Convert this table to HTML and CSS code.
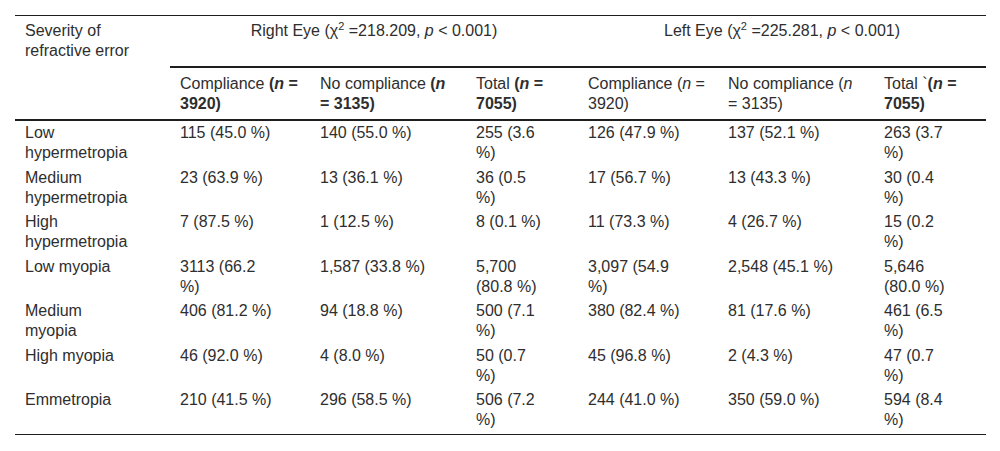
FILE: index.html
```html
<!DOCTYPE html>
<html lang="en">
<head>
<meta charset="utf-8">
<title>Compliance by severity of refractive error</title>
<link rel="stylesheet" href="styles.css">
</head>
<body>
<table class="data">
  <colgroup>
    <col class="c-stub">
    <col class="c-comp">
    <col class="c-nocomp">
    <col class="c-total">
    <col class="c-comp">
    <col class="c-nocomp">
    <col class="c-total">
  </colgroup>
  <thead>
    <tr class="group-row">
      <th class="stub">Severity of<br>refractive error</th>
      <th class="eye" colspan="3">Right Eye (χ<sup>2</sup> =218.209, <i>p</i> &lt; 0.001)</th>
      <th class="eye" colspan="3">Left Eye (χ<sup>2</sup> =225.281, <i>p</i> &lt; 0.001)</th>
    </tr>
    <tr class="sub-row">
      <th></th>
      <th>Compliance <b>(<i>n</i> =<br>3920)</b></th>
      <th>No compliance <b>(<i>n</i><br>= 3135)</b></th>
      <th>Total <b>(<i>n</i> =<br>7055)</b></th>
      <th>Compliance (<i>n</i> =<br>3920)</th>
      <th>No compliance (<i>n</i><br>= 3135)</th>
      <th>Total `<b>(<i>n</i> =<br>7055)</b></th>
    </tr>
  </thead>
  <tbody>
    <tr>
      <td>Low<br>hypermetropia</td>
      <td>115 (45.0 %)</td>
      <td>140 (55.0 %)</td>
      <td>255 (3.6<br>%)</td>
      <td>126 (47.9 %)</td>
      <td>137 (52.1 %)</td>
      <td>263 (3.7<br>%)</td>
    </tr>
    <tr>
      <td>Medium<br>hypermetropia</td>
      <td>23 (63.9 %)</td>
      <td>13 (36.1 %)</td>
      <td>36 (0.5<br>%)</td>
      <td>17 (56.7 %)</td>
      <td>13 (43.3 %)</td>
      <td>30 (0.4<br>%)</td>
    </tr>
    <tr>
      <td>High<br>hypermetropia</td>
      <td>7 (87.5 %)</td>
      <td>1 (12.5 %)</td>
      <td>8 (0.1 %)</td>
      <td>11 (73.3 %)</td>
      <td>4 (26.7 %)</td>
      <td>15 (0.2<br>%)</td>
    </tr>
    <tr>
      <td>Low myopia</td>
      <td>3113 (66.2<br>%)</td>
      <td>1,587 (33.8 %)</td>
      <td>5,700<br>(80.8 %)</td>
      <td>3,097 (54.9<br>%)</td>
      <td>2,548 (45.1 %)</td>
      <td>5,646<br>(80.0 %)</td>
    </tr>
    <tr>
      <td>Medium<br>myopia</td>
      <td>406 (81.2 %)</td>
      <td>94 (18.8 %)</td>
      <td>500 (7.1<br>%)</td>
      <td>380 (82.4 %)</td>
      <td>81 (17.6 %)</td>
      <td>461 (6.5<br>%)</td>
    </tr>
    <tr>
      <td>High myopia</td>
      <td>46 (92.0 %)</td>
      <td>4 (8.0 %)</td>
      <td>50 (0.7<br>%)</td>
      <td>45 (96.8 %)</td>
      <td>2 (4.3 %)</td>
      <td>47 (0.7<br>%)</td>
    </tr>
    <tr class="last-row">
      <td>Emmetropia</td>
      <td>210 (41.5 %)</td>
      <td>296 (58.5 %)</td>
      <td>506 (7.2<br>%)</td>
      <td>244 (41.0 %)</td>
      <td>350 (59.0 %)</td>
      <td>594 (8.4<br>%)</td>
    </tr>
  </tbody>
</table>
</body>
</html>
```

FILE: styles.css
```css
html, body {
  margin: 0;
  padding: 0;
  background: #ffffff;
}

body {
  font-family: "Liberation Sans", Arial, sans-serif;
  font-size: 16px;
  color: #2e2e2e;
}

.data {
  margin: 15px;
  width: 970px;
  table-layout: fixed;
  border-collapse: collapse;
  border-top: 1px solid #1e1e1e;
  border-bottom: 1px solid #1e1e1e;
  line-height: 20px;
}

.c-stub { width: 155px; }
.c-comp { width: 140px; }
.c-nocomp { width: 156px; }
.c-total { width: 112px; }

.data th,
.data td {
  text-align: left;
  vertical-align: top;
  font-weight: normal;
  white-space: nowrap;
  padding: 2px 0 2.5px 10px;
}

.data thead th {
  padding: 5px 0 6px 10px;
}

.data .sub-row th {
  padding: 6px 0 5px 10px;
  border-bottom: 2px solid #1e1e1e;
}

.data thead th.eye {
  text-align: center;
  padding-left: 0;
  border-bottom: 2px solid #1e1e1e;
}

.data .last-row td {
  padding-bottom: 4px;
}

.data b {
  font-weight: bold;
}

.data sup {
  font-size: 11px;
  line-height: 0;
  vertical-align: 6px;
}
```
